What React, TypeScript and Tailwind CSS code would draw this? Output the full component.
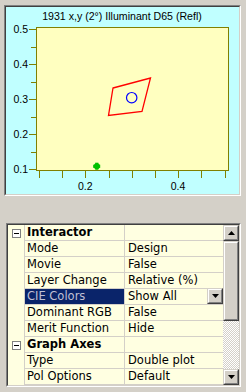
import type { ReactNode } from "react";

type Row = { name: string; value?: string; category?: boolean; selected?: boolean; dropdown?: boolean };

const rows: Row[] = [
  { name: "Interactor", category: true },
  { name: "Mode", value: "Design" },
  { name: "Movie", value: "False" },
  { name: "Layer Change", value: "Relative (%)" },
  { name: "CIE Colors", value: "Show All", selected: true, dropdown: true },
  { name: "Dominant RGB", value: "False" },
  { name: "Merit Function", value: "Hide" },
  { name: "Graph Axes", category: true },
  { name: "Type", value: "Double plot" },
  { name: "Pol Options", value: "Default" },
];

// y axis: 0.1 -> 169, 35px per 0.1
const yOf = (v: number) => 169 - (v - 0.1) * 350;
// x axis: 0.2 -> 85.3, 46.4px per 0.1
const xOf = (v: number) => 85.3 + (v - 0.2) * 464;

function Sunken({ className, children }: { className: string; children: ReactNode }) {
  return (
    <div className={`flex border border-t-[#808080] border-l-[#808080] border-b-white border-r-white ${className}`}>
      <div className="flex-1 flex border border-t-[#404040] border-l-[#404040] border-b-[#d4d0c8] border-r-[#d4d0c8] min-w-0">
        {children}
      </div>
    </div>
  );
}

function Arrow({ up }: { up?: boolean }) {
  return (
    <svg width="7" height="4" viewBox="0 0 7 4">
      <polygon points={up ? "3.5,0 7,4 0,4" : "0,0 7,0 3.5,4"} fill="#000" />
    </svg>
  );
}

function RaisedButton({ up, className }: { up?: boolean; className: string }) {
  return (
    <div className={`flex border border-t-[#d4d0c8] border-l-[#d4d0c8] border-b-[#404040] border-r-[#404040] bg-[#d4d0c8] ${className}`}>
      <div className="flex-1 flex items-center justify-center border border-t-white border-l-white border-b-[#808080] border-r-[#808080]">
        <Arrow up={up} />
      </div>
    </div>
  );
}

function Chart() {
  const yMajor = [0.5, 0.4, 0.3, 0.2, 0.1];
  const yMinor = [0.45, 0.35, 0.25, 0.15];
  const xTicks = [0.1, 0.15, 0.2, 0.25, 0.3, 0.35, 0.4, 0.45, 0.5];
  return (
    <svg width="233" height="187" viewBox="6 7 233 187" className="block" style={{ fontFamily: '"Liberation Sans", Arial, sans-serif' }}>
      <text x="122" y="20" fontSize="10.6" textAnchor="middle" fill="#000">
        1931 x,y (2°) Illuminant D65 (Refl)
      </text>
      <rect x="36.5" y="27.5" width="192" height="143" fill="#ffffc0" stroke="#808000" strokeWidth="1" />
      {yMajor.map((v) => (
        <g key={v}>
          <line x1="29" x2="36" y1={Math.round(yOf(v)) + 0.5} y2={Math.round(yOf(v)) + 0.5} stroke="#808000" />
          <text x="28" y={yOf(v) + 4} fontSize="10.5" textAnchor="end" fill="#000">
            {v.toFixed(1)}
          </text>
        </g>
      ))}
      {yMinor.map((v) => (
        <line key={v} x1="31" x2="36" y1={Math.round(yOf(v)) + 0.5} y2={Math.round(yOf(v)) + 0.5} stroke="#808000" />
      ))}
      {xTicks.map((v) => (
        <line key={v} x1={Math.round(xOf(v)) + 0.5} x2={Math.round(xOf(v)) + 0.5} y1="171" y2="178" stroke="#808000" />
      ))}
      {[0.2, 0.4].map((v) => (
        <text key={v} x={xOf(v)} y="189.5" fontSize="10.5" textAnchor="middle" fill="#000">
          {v.toFixed(1)}
        </text>
      ))}
      <polygon points="113,88 150.5,78 142,111.5 108.5,115.5" fill="none" stroke="#ff0000" strokeWidth="1.3" />
      <circle cx="131.7" cy="97.7" r="5.2" fill="none" stroke="#0000ff" strokeWidth="1.2" />
      <g fill="#00c000">
        <rect x="95.2" y="162.7" width="3.2" height="7" />
        <rect x="93.2" y="164.7" width="7" height="3.2" />
        <circle cx="96.8" cy="166.3" r="3" />
      </g>
    </svg>
  );
}

function Grid() {
  return (
    <div className="flex-1 flex bg-[#ffffe1]">
      <div className="flex-1 flex flex-col min-w-0">
        {rows.map((r) => (
          <div key={r.name} className="flex h-[16px]">
            <div className="w-[17px] shrink-0 border-r border-[#d4d0c8] flex items-center justify-center">
              {r.category && (
                <div className="w-[9px] h-[9px] border border-[#808080] bg-white flex items-center justify-center">
                  <div className="w-[5px] h-px bg-black" />
                </div>
              )}
            </div>
            <div
              className={`w-[100px] shrink-0 border-r border-b border-[#d4d0c8] pl-[2px] leading-[15px] whitespace-nowrap overflow-hidden ${
                r.category ? "font-bold" : ""
              } ${r.selected ? "bg-[#0a246a] text-[#c0c0d4]" : "text-black"}`}
            >
              {r.name}
            </div>
            <div className="flex-1 flex border-b border-[#d4d0c8] min-w-0">
              <div className="flex-1 pl-[3px] leading-[15px] whitespace-nowrap overflow-hidden text-black">{r.value ?? ""}</div>
              {r.dropdown && <RaisedButton className="w-[16px] h-[16px] -mt-[1px] shrink-0" />}
            </div>
          </div>
        ))}
      </div>
      <div className="w-[16px] shrink-0 flex flex-col">
        <RaisedButton up className="h-[16px]" />
        <div className="h-[80px] flex border border-t-[#d4d0c8] border-l-[#d4d0c8] border-b-[#404040] border-r-[#404040] bg-[#d4d0c8]">
          <div className="flex-1 border border-t-white border-l-white border-b-[#808080] border-r-[#808080]" />
        </div>
        <div className="flex-1 bg-[repeating-conic-gradient(#d4d0c8_0%_25%,#ffffff_0%_50%)] bg-size-[2px_2px]" />
        <RaisedButton className="h-[16px]" />
      </div>
    </div>
  );
}

export default function App() {
  return (
    <div
      className="w-[246px] h-[392px] overflow-hidden bg-[#d4d0c8] flex flex-col text-[11.5px]"
      style={{ fontFamily: '"DejaVu Sans", Verdana, sans-serif' }}
    >
      <Sunken className="ml-[4px] mt-[5px] w-[237px] h-[191px]">
        <div className="flex-1 bg-[#c0ffff] overflow-hidden">
          <Chart />
        </div>
      </Sunken>
      <Sunken className="ml-[6px] mt-[27px] w-[235px] h-[164px]">
        <Grid />
      </Sunken>
    </div>
  );
}
